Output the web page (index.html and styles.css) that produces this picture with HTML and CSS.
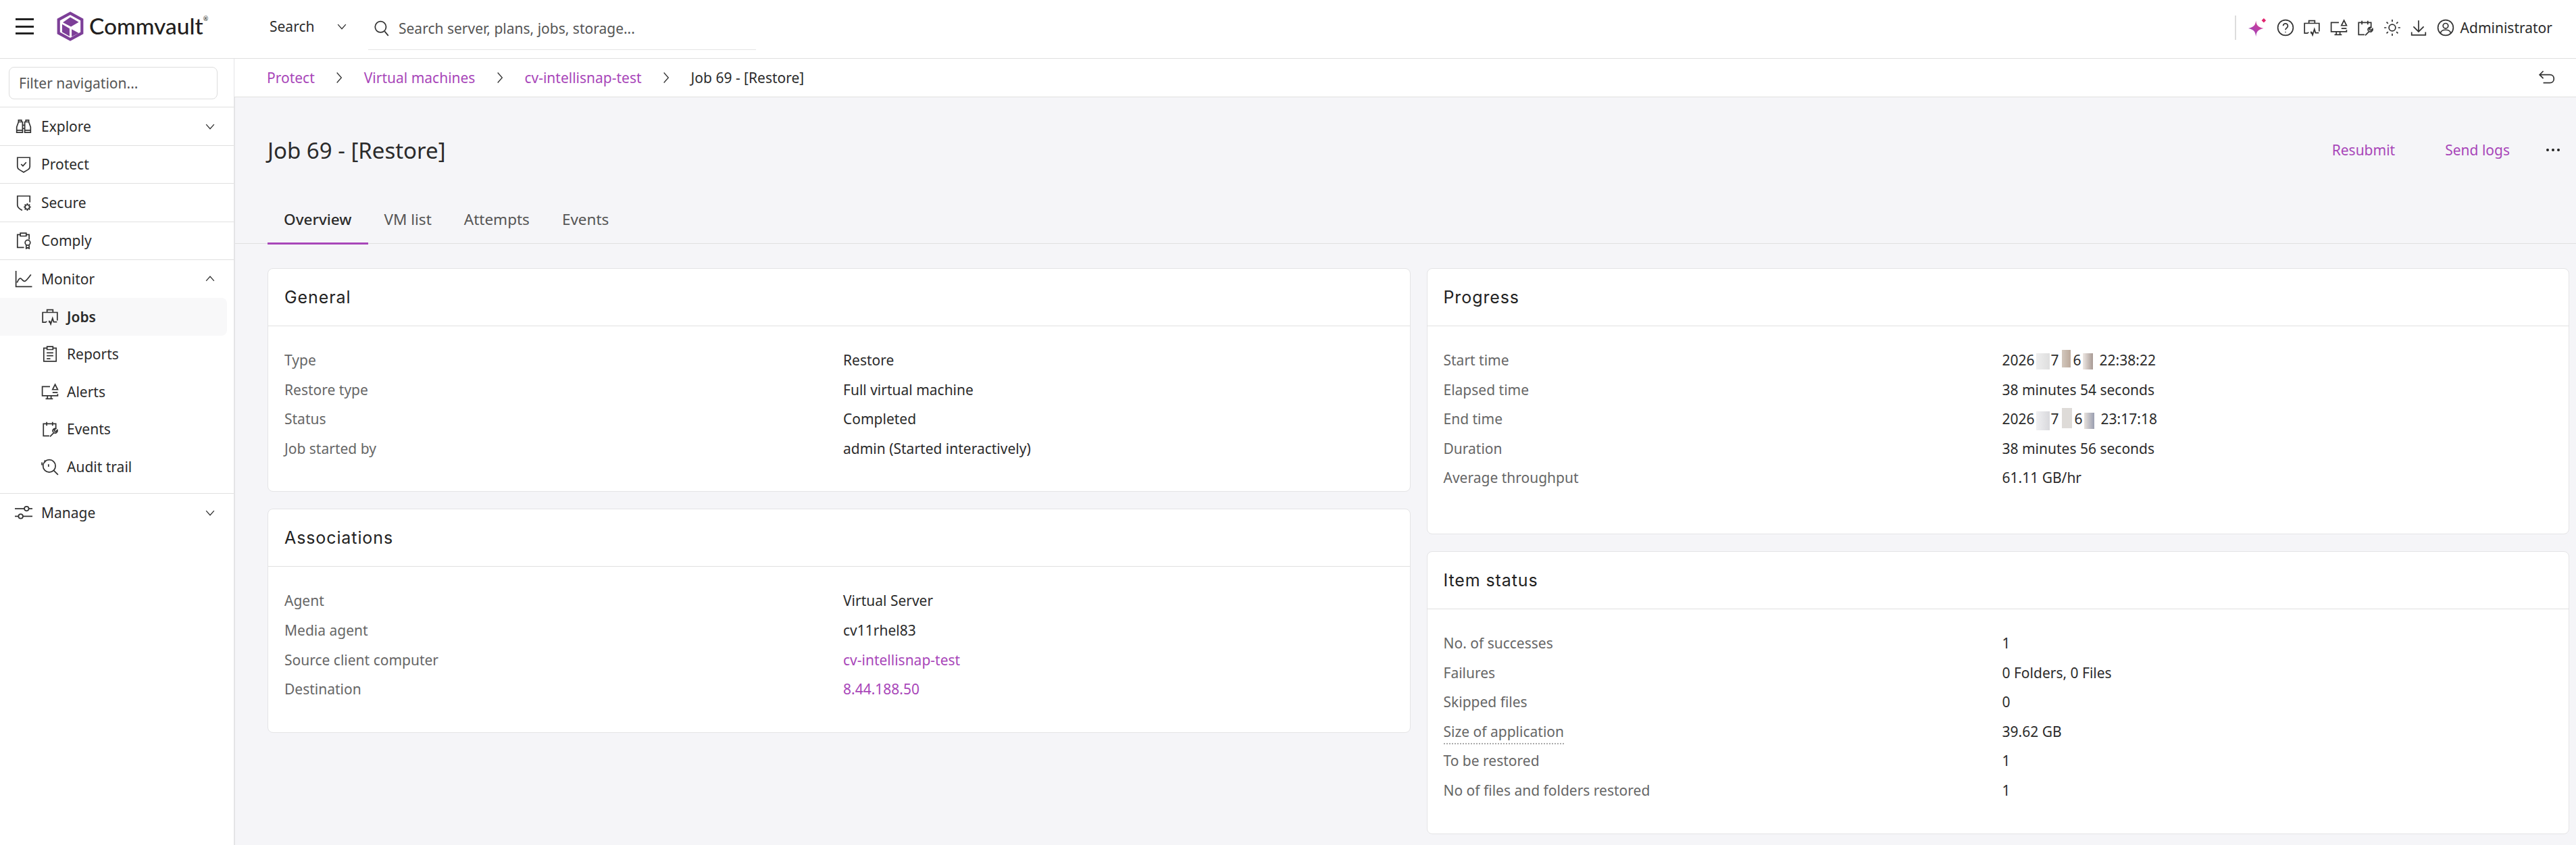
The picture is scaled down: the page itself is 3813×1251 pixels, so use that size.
FILE: index.html
```html
<!DOCTYPE html>
<html>
    <head>
        <meta charset="utf-8">
        <title>Job 69 - [Restore]</title>
        <link rel="stylesheet" href="styles.css">
    </head>
    <body>
        <svg class="defs" width="0" height="0">
            <symbol id="i-jobs" viewBox="0 0 24 24"><path d="M8 6V2.500h8V6M13.500 19.500h-3M6.500 19.500H2V6h20v11M7 19.500v-1.500M10 18h1.500l1.500 4 2.500-8 1.500 5h4.500"/></symbol>
            <symbol id="i-alerts" viewBox="0 0 24 24"><path d="M12 5H1.500v12.500h21V15M8.500 17.500v4M13.500 17.500v4M6 21.500h10M19 2l3.500 7h-7zM15.500 13h7"/></symbol>
            <symbol id="i-events" viewBox="0 0 24 24"><path d="M11 21.500H3V5h17v7M7.500 2.500v5M15.500 2.500v5M12 22.500l5.500-5.500M17 17a3.200 3.200 0 0 0 5-3.500l-2 2-1.800-.5-.2-1.800 2-1.700a3.200 3.200 0 0 0-3.500 5"/></symbol>
            <symbol id="i-chevron" viewBox="0 0 24 24"><path d="M5 8.500l7 8 7-8"/></symbol>
            <symbol id="i-chevron-right" viewBox="0 0 24 24"><path d="M8 3l8 9-8 9"/></symbol>
        </svg>

        <header class="topbar">
            <button class="menu-btn"><span></span><span></span><span></span></button>
            <div class="logo">
                <svg class="logo-mark" viewBox="0 0 38 42">
                    <path class="hex" d="M19 2.500L35.500 11.500V30.500L19 39.500L2.500 30.500V11.500Z"/>
                    <path class="cube" d="M19 8L31 15L20 21.500L8.500 15.500zM7.500 18L18 24V35L7.500 29zM21 25L31 30.500L21 35.500z"/>
                </svg>
                <span class="logo-text">Commvault<sup>®</sup></span>
            </div>
            <div class="search-type">
                <span>Search</span>
                <svg class="icon small"><use href="#i-chevron"/></svg>
            </div>
            <div class="search-box">
                <svg class="icon" viewBox="0 0 24 24"><circle cx="10.500" cy="10" r="7.500"/><path d="M16 16l5 6"/></svg>
                <span>Search server, plans, jobs, storage...</span>
            </div>
            <div class="top-actions">
                <svg class="icon spark" viewBox="0 0 30 30">
                    <defs><linearGradient id="spark-fill" x1="0" y1="1" x2="1" y2="0"><stop offset="0" stop-color="#8f45c4"/><stop offset="1" stop-color="#e23c8c"/></linearGradient></defs>
                    <path d="M12 4C13 11 15 14 24 16C15 18 13 21 12 29C11 21 9 18 0 16C9 14 11 11 12 4Z"/>
                    <path class="spark-dot" d="M24.500 0L28 3.500L24.500 7L21 3.500Z"/>
                </svg>
                <svg class="icon" viewBox="0 0 24 24"><circle cx="12" cy="12" r="10.500"/><path d="M8.800 9.500a3.200 3.200 0 1 1 5 2.700c-1.200.8-1.800 1.400-1.800 2.800M12 17.500v1"/></svg>
                <svg class="icon"><use href="#i-jobs"/></svg>
                <svg class="icon"><use href="#i-alerts"/></svg>
                <svg class="icon"><use href="#i-events"/></svg>
                <svg class="icon" viewBox="0 0 24 24"><circle cx="12" cy="12" r="4.500"/><path d="M12 1v3M12 20v3M1 12h3M20 12h3M4.200 4.200l2.100 2.100M17.700 17.700l2.100 2.100M4.200 19.800l2.100-2.100M17.700 6.300l2.100-2.100"/></svg>
                <svg class="icon" viewBox="0 0 24 24"><path d="M12 2v15M5 10.500l7 7 7-7M2.500 18v4h19v-4"/></svg>
                <span class="user">
                    <svg class="icon" viewBox="0 0 24 24"><circle cx="12" cy="12" r="10.500"/><circle cx="12" cy="9.500" r="3.500"/><path d="M5 19.500c.5-3 3-4.500 7-4.500s6.500 1.500 7 4.500"/></svg>
                    <span>Administrator</span>
                </span>
            </div>
        </header>

        <div class="app">
            <nav class="sidebar">
                <div class="filter-wrap"><div class="filter">Filter navigation...</div></div>

                <div class="nav-row">
                    <svg class="icon" viewBox="0 0 24 24"><path d="M5 3.500h4v2.500h-4zM15 3.500h4v2.500h-4zM5 6L2.500 13v7.500h8V6zM19 6l2.500 7v7.500h-8V6zM10.500 10.500h3M10.500 15h3M2.500 17.500h8M13.500 17.500h8"/></svg>
                    <span>Explore</span>
                    <svg class="icon small caret"><use href="#i-chevron"/></svg>
                </div>
                <div class="nav-row">
                    <svg class="icon" viewBox="0 0 24 24"><path d="M3.500 3h17v12.500c0 2-1 3-2.500 4L12 23l-6-3.500c-1.500-1-2.500-2-2.500-4zM8.500 12l2.500 2.500 4.500-5"/></svg>
                    <span>Protect</span>
                </div>
                <div class="nav-row">
                    <svg class="icon" viewBox="0 0 24 24"><path d="M20.500 11.500V3h-17v12.500c0 2.500 2.500 5 6.500 7"/><circle cx="17" cy="18" r="3"/><path d="M17 13v2M17 21v2M12 18h2M20 18h2M13.500 14.500l1.300 1.300M19.200 20.200l1.300 1.300M13.500 21.500l1.300-1.300M19.200 15.800l1.300-1.300"/></svg>
                    <span>Secure</span>
                </div>
                <div class="nav-row">
                    <svg class="icon" viewBox="0 0 24 24"><path d="M7.500 4H3.500v17.500h9M15.500 4h4v6.500M7.500 2h8v4h-8z"/><circle cx="17.500" cy="15" r="3.500"/><path d="M15.500 18v5l2-1.200 2 1.200v-5"/></svg>
                    <span>Comply</span>
                </div>

                <div class="nav-group">
                    <div class="nav-group-head">
                        <svg class="icon" viewBox="0 0 24 24"><path d="M1.500 1v21.500h22M3 17c2-5 4-7 6-5s3 4 5 3 5-5 8-9"/></svg>
                        <span>Monitor</span>
                        <svg class="icon small caret up"><use href="#i-chevron"/></svg>
                    </div>
                    <div class="nav-sub active"><svg class="icon"><use href="#i-jobs"/></svg><span>Jobs</span></div>
                    <div class="nav-sub">
                        <svg class="icon" viewBox="0 0 24 24"><path d="M8 4H3.500v18h17V4H16M8 2h8v4H8zM7.500 10.500h9M7.500 14.500h9M7.500 18.500h5"/></svg>
                        <span>Reports</span>
                    </div>
                    <div class="nav-sub"><svg class="icon"><use href="#i-alerts"/></svg><span>Alerts</span></div>
                    <div class="nav-sub"><svg class="icon"><use href="#i-events"/></svg><span>Events</span></div>
                    <div class="nav-sub">
                        <svg class="icon" viewBox="0 0 24 24"><circle cx="11" cy="11" r="8.500"/><path d="M17 17l6 6M1 6v4M10 8.500v3.500M5 3v3"/></svg>
                        <span>Audit trail</span>
                    </div>
                </div>

                <div class="nav-row last">
                    <svg class="icon" viewBox="0 0 24 24"><circle cx="16" cy="6.500" r="3"/><circle cx="8" cy="17" r="3"/><path d="M0 6.500h13M19 6.500h5M0 17h5M11 17h13"/></svg>
                    <span>Manage</span>
                    <svg class="icon small caret"><use href="#i-chevron"/></svg>
                </div>
            </nav>

            <main class="main">
                <div class="crumbs">
                    <a>Protect</a>
                    <svg class="icon small"><use href="#i-chevron-right"/></svg>
                    <a>Virtual machines</a>
                    <svg class="icon small"><use href="#i-chevron-right"/></svg>
                    <a>cv-intellisnap-test</a>
                    <svg class="icon small"><use href="#i-chevron-right"/></svg>
                    <span>Job 69 - [Restore]</span>
                    <svg class="icon back" viewBox="0 0 24 24"><path d="M7 3L2 8l5 5M2 8h14c3.500 0 5.500 2.500 5.500 5.500S19.500 19 16 19H7"/></svg>
                </div>

                <div class="page-head">
                    <h1>Job 69 - [Restore]</h1>
                    <div class="page-actions">
                        <a>Resubmit</a>
                        <a>Send logs</a>
                        <span class="dots"><i></i><i></i><i></i></span>
                    </div>
                </div>

                <div class="tabs">
                    <span class="tab active">Overview</span>
                    <span class="tab">VM list</span>
                    <span class="tab">Attempts</span>
                    <span class="tab">Events</span>
                </div>

                <div class="columns">
                    <div class="column">
                        <section class="card">
                            <h2>General</h2>
                            <dl>
                                <dt>Type</dt><dd>Restore</dd>
                                <dt>Restore type</dt><dd>Full virtual machine</dd>
                                <dt>Status</dt><dd>Completed</dd>
                                <dt>Job started by</dt><dd>admin (Started interactively)</dd>
                            </dl>
                        </section>
                        <section class="card">
                            <h2>Associations</h2>
                            <dl>
                                <dt>Agent</dt><dd>Virtual Server</dd>
                                <dt>Media agent</dt><dd>cv11rhel83</dd>
                                <dt>Source client computer</dt><dd><a>cv-intellisnap-test</a></dd>
                                <dt>Destination</dt><dd><a>8.44.188.50</a></dd>
                            </dl>
                        </section>
                    </div>
                    <div class="column">
                        <section class="card tall">
                            <h2>Progress</h2>
                            <dl>
                                <dt>Start time</dt><dd>2026<i class="blot b1"></i>7<i class="blot b2"></i>6<i class="blot b3"></i>22:38:22</dd>
                                <dt>Elapsed time</dt><dd>38 minutes 54 seconds</dd>
                                <dt>End time</dt><dd>2026<i class="blot b4"></i>7<i class="blot b5"></i>6<i class="blot b6"></i>23:17:18</dd>
                                <dt>Duration</dt><dd>38 minutes 56 seconds</dd>
                                <dt>Average throughput</dt><dd>61.11 GB/hr</dd>
                            </dl>
                        </section>
                        <section class="card">
                            <h2>Item status</h2>
                            <dl>
                                <dt>No. of successes</dt><dd>1</dd>
                                <dt>Failures</dt><dd>0 Folders, 0 Files</dd>
                                <dt>Skipped files</dt><dd>0</dd>
                                <dt><span class="hint">Size of application</span></dt><dd>39.62 GB</dd>
                                <dt>To be restored</dt><dd>1</dd>
                                <dt>No of files and folders restored</dt><dd>1</dd>
                            </dl>
                        </section>
                    </div>
                </div>
            </main>
        </div>
    </body>
</html>
```

FILE: styles.css
```css
* {
    box-sizing: border-box;
}
html, body {
    margin: 0;
    height: 100%;
}
body {
    font-family: "Noto Sans", "Open Sans", sans-serif;
    font-size: 21px;
    color: #2b2b2b;
    background: #fff;
    display: flex;
    flex-direction: column;
    overflow: hidden;
}
.defs {
    position: absolute;
}
.icon {
    width: 26px;
    height: 26px;
    flex: none;
    fill: none;
    stroke: #333;
    stroke-width: 1.6;
}
.icon.small {
    width: 20px;
    height: 20px;
}

/* top bar */
.topbar {
    height: 87px;
    flex: none;
    display: flex;
    align-items: center;
    border-bottom: 1px solid #e0e0e0;
    padding-left: 23px;
}
.menu-btn {
    width: 27px;
    padding: 0;
    border: 0;
    background: none;
    display: flex;
    flex-direction: column;
    gap: 7.500px;
    margin-right: 34px;
    margin-bottom: 8px;
}
.menu-btn span {
    height: 3px;
    background: #222;
}
.logo {
    display: flex;
    align-items: center;
    width: 315px;
    gap: 8px;
    margin-bottom: 8px;
}
.logo-mark {
    width: 40px;
    height: 44px;
}
.logo-mark .hex {
    fill: none;
    stroke: #7d3f98;
    stroke-width: 4;
}
.logo-mark .cube {
    fill: #7d3f98;
}
.logo-text {
    font-family: "Lato", sans-serif;
    font-size: 33.500px;
    font-weight: 500;
    color: #231f20;
    line-height: 1;
}
.logo-text sup {
    font-size: 9px;
    vertical-align: 20px;
    line-height: 0;
}
.search-type {
    display: flex;
    align-items: center;
    gap: 31px;
    width: 146px;
    padding-bottom: 8px;
}
.search-box {
    width: 574px;
    height: 56px;
    display: flex;
    align-items: center;
    gap: 12px;
    padding: 0 0 8px 7px;
    margin-top: 6px;
    color: #555;
    border-bottom: 1px solid #e4e4e4;
}
.top-actions {
    margin-left: auto;
    display: flex;
    align-items: center;
    gap: 13.500px;
    height: 36px;
    padding-left: 18px;
    padding-right: 35px;
    margin-bottom: 5px;
    border-left: 2px solid #ddd;
}
.spark {
    width: 28px;
    height: 28px;
    stroke: none;
    fill: url(#spark-fill);
}
.spark .spark-dot {
    fill: #e2246e;
}
.user {
    display: flex;
    align-items: center;
    gap: 9px;
    color: #2b2b2b;
}

/* sidebar */
.app {
    flex: 1;
    display: flex;
    min-height: 0;
}
.sidebar {
    width: 348px;
    flex: none;
    border-right: 2px solid #e4e4e6;
}
.filter-wrap {
    height: 72px;
    padding: 12px 24px 0 13px;
    border-bottom: 1px solid #e0e0e0;
}
.filter {
    height: 48px;
    line-height: 46px;
    padding-left: 14px;
    border: 1px solid #ddd;
    border-radius: 8px;
    color: #555;
}
.nav-row, .nav-group-head {
    height: 56.500px;
    display: flex;
    align-items: center;
    gap: 13px;
    padding: 0 25px 0 22px;
    border-bottom: 1px solid #e0e0e0;
}
.nav-row.last {
    border-bottom: 0;
}
.nav-group-head {
    height: 56px;
    border-bottom: 0;
}
.caret {
    margin-left: auto;
}
.caret.up {
    transform: rotate(180deg);
}
.nav-group {
    border-bottom: 1px solid #e0e0e0;
    padding-bottom: 11px;
}
.nav-sub {
    height: 55.500px;
    width: 336px;
    display: flex;
    align-items: center;
    gap: 12px;
    padding-left: 61px;
    border-radius: 0 8px 8px 0;
}
.nav-sub.active {
    background: #f8f8f9;
    font-weight: 600;
}

/* main */
.main {
    flex: 1;
    min-width: 0;
    background: #f5f5f8;
}
.crumbs {
    height: 57px;
    display: flex;
    align-items: center;
    gap: 26.500px;
    padding: 0 10px 0 48px;
    background: #fff;
    border-bottom: 1px solid #e0e0e0;
    margin-left: -1px;
}
.crumbs a, .page-actions a, dd a {
    color: #a846b9;
}
.crumbs .back {
    margin-left: auto;
    margin-right: 20px;
}
.page-head {
    height: 160px;
    display: flex;
    align-items: center;
    justify-content: space-between;
    padding: 0 14px 4px 48px;
}
h1 {
    margin: 0;
    font-size: 33px;
    font-weight: 400;
}
.page-actions {
    display: flex;
    align-items: center;
    gap: 74px;
}
.dots {
    display: flex;
    gap: 4px;
    margin-left: -20px;
    margin-right: 10px;
}
.dots i {
    width: 4px;
    height: 4px;
    border-radius: 50%;
    background: #222;
}
.tabs {
    display: flex;
    height: 57px;
    padding-left: 48px;
    border-bottom: 1px solid #e0e0e0;
}
.tab {
    height: 58px;
    line-height: 42px;
    padding: 0 24px;
    font-size: 22.500px;
    color: #555;
    border-bottom: 3px solid transparent;
}
.tab.active {
    color: #2b2b2b;
    font-weight: 500;
    border-bottom-color: #a846b9;
}

/* cards */
.columns {
    display: grid;
    grid-template-columns: 1fr 1fr;
    gap: 24px;
    padding: 36px 10px 0 48px;
    align-items: start;
}
.column {
    display: flex;
    flex-direction: column;
    gap: 25px;
}
.card {
    background: #fff;
    border: 1px solid #e4e4e6;
    border-radius: 8px;
}
.card h2 {
    margin: 0;
    height: 85px;
    line-height: 84px;
    padding-left: 24px;
    font-family: "Inter", sans-serif;
    font-size: 25px;
    font-weight: 400;
    letter-spacing: .9px;
    color: #222;
    border-bottom: 1px solid #e0e0e0;
}
dl {
    margin: 0;
    padding: 29px 0 41px 24px;
    display: grid;
    grid-template-columns: 827px 1fr;
    line-height: 43.600px;
}
.card.tall dl {
    padding-bottom: 60px;
}
dt {
    color: #666;
}
dd {
    margin: 0;
}
.hint {
    padding-bottom: 3px;
    border-bottom: 2px dotted #aaa;
}
.blot {
    display: inline-block;
    vertical-align: middle;
    margin: -8px 2px;
    height: 24px;
    width: 20px;
}
.b1 { background: linear-gradient(90deg, #eee, #dedede); }
.b2 { width: 13px; height: 26px; margin: -8px 4px 0 4px; background: linear-gradient(90deg, #d3c8be, #bcaa9c); }
.b3 { width: 15px; margin-right: 10px; background: linear-gradient(90deg, #eee8e4, #a89a94); }
.b4 { height: 28px; background: linear-gradient(90deg, #f0f0f2, #d8d8dc); }
.b5 { width: 15px; height: 30px; margin: -8px 4px 0 4px; background: #dedbd8; }
.b6 { width: 15px; margin-right: 10px; background: linear-gradient(90deg, #e8e2dc, #9a9eb0); }
```
